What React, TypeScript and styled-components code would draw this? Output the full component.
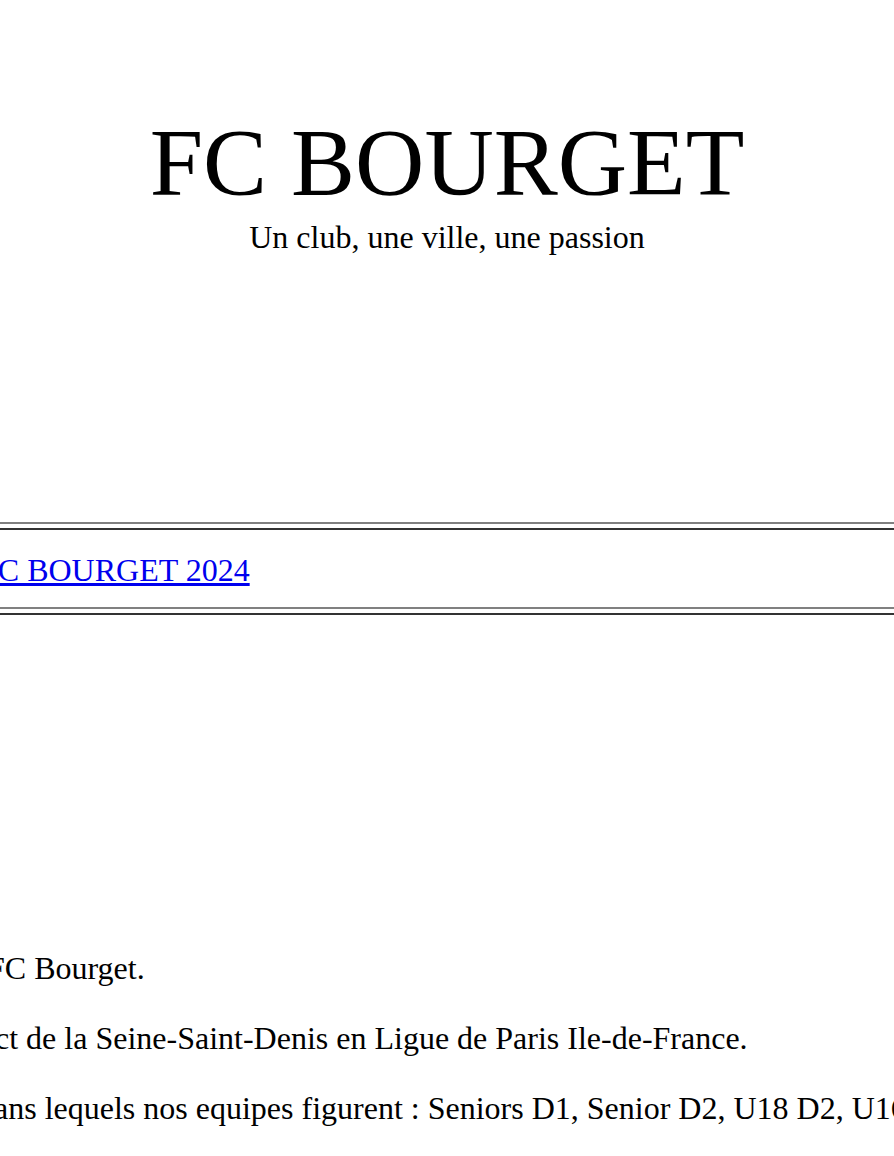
import React from "react";
import styled, { createGlobalStyle } from "styled-components";

const GlobalStyle = createGlobalStyle`
  html, body {
    margin: 0;
    padding: 0;
    background: #ffffff;
  }
  body {
    font-family: "Liberation Serif", "Times New Roman", Times, serif;
    color: #000000;
  }
`;

const Page = styled.div`
  width: 100%;
  overflow: hidden;
`;

const Masthead = styled.header`
  text-align: center;
  padding-top: 108px;
`;

const Title = styled.h1`
  margin: 0;
  font-size: 96px;
  font-weight: 400;
  line-height: 110px;
`;

const Tagline = styled.p`
  margin: 0;
  font-size: 32px;
  line-height: 39px;
`;

const Band = styled.section`
  margin-top: 265px;
`;

const Rule = styled.div`
  box-sizing: border-box;
  height: 8px;
  border-top: 2px solid #808080;
  border-bottom: 2px solid #333333;
`;

const BandRow = styled.div`
  padding: 22px 0 18px;
  font-size: 32px;
  line-height: 37px;
  white-space: nowrap;
`;

const BandLink = styled.a<{ $shift: number }>`
  display: inline-block;
  margin-left: ${(p) => p.$shift}px;
  color: #0000ee;
  text-decoration: underline;
`;

const Article = styled.section`
  margin-top: 334px;
`;

const Para = styled.p<{ $shift: number }>`
  margin: 0 0 32px;
  margin-left: ${(p) => p.$shift}px;
  font-size: 32px;
  line-height: 38px;
  white-space: nowrap;
`;

const paragraphs = [
  { shift: -13, text: "FC Bourget." },
  { shift: -5, text: "ct de la Seine-Saint-Denis en Ligue de Paris Ile-de-France." },
  {
    shift: -6,
    text: "ans lequels nos equipes figurent : Seniors D1, Senior D2, U18 D2, U16 D2, U14 D2.",
  },
];

export default function App() {
  return (
    <>
      <GlobalStyle />
      <Page>
        <Masthead>
          <Title>FC BOURGET</Title>
          <Tagline>Un club, une ville, une passion</Tagline>
        </Masthead>
        <Band>
          <Rule />
          <BandRow>
            <BandLink href="#" $shift={-20}>
              FC BOURGET 2024
            </BandLink>
          </BandRow>
          <Rule />
        </Band>
        <Article>
          {paragraphs.map((p, i) => (
            <Para key={i} $shift={p.shift}>
              {p.text}
            </Para>
          ))}
        </Article>
      </Page>
    </>
  );
}
